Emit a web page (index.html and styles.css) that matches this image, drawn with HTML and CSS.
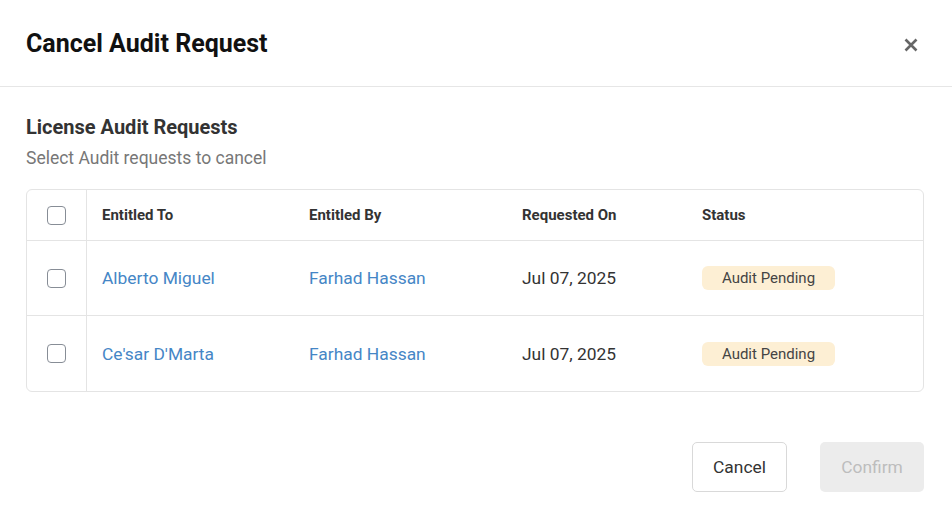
FILE: index.html
```html
<!DOCTYPE html>
<html lang="en">
<head>
  <meta charset="UTF-8">
  <meta name="viewport" content="width=device-width, initial-scale=1.0">
  <title>Cancel Audit Request</title>
  <link rel="stylesheet" href="styles.css">
</head>
<body>
  <div class="modal">
    <div class="modal-header">
      <h2>Cancel Audit Request</h2>
      <button class="close-btn" aria-label="Close">
        <svg width="14" height="14" viewBox="0 0 14 14">
          <path d="M1.5 1.5 L12.5 12.5 M12.5 1.5 L1.5 12.5" stroke="#666" stroke-width="2.6" stroke-linecap="butt"/>
        </svg>
      </button>
    </div>

    <div class="modal-body">
      <h3>License Audit Requests</h3>
      <p class="subtitle">Select Audit requests to cancel</p>

      <div class="audit-table">
        <div class="row head">
          <div class="cell check"><span class="checkbox"></span></div>
          <div class="cell">Entitled To</div>
          <div class="cell">Entitled By</div>
          <div class="cell">Requested On</div>
          <div class="cell">Status</div>
        </div>
        <div class="row">
          <div class="cell check"><span class="checkbox"></span></div>
          <div class="cell"><a href="#">Alberto Miguel</a></div>
          <div class="cell"><a href="#">Farhad Hassan</a></div>
          <div class="cell">Jul 07, 2025</div>
          <div class="cell"><span class="badge">Audit Pending</span></div>
        </div>
        <div class="row">
          <div class="cell check"><span class="checkbox"></span></div>
          <div class="cell"><a href="#">Ce'sar D'Marta</a></div>
          <div class="cell"><a href="#">Farhad Hassan</a></div>
          <div class="cell">Jul 07, 2025</div>
          <div class="cell"><span class="badge">Audit Pending</span></div>
        </div>
      </div>
    </div>

    <div class="modal-footer">
      <button class="btn btn-cancel">Cancel</button>
      <button class="btn btn-confirm" disabled>Confirm</button>
    </div>
  </div>
</body>
</html>
```

FILE: styles.css
```css
body {
  margin: 0;
  font-family: Roboto, "Liberation Sans", Arial, sans-serif;
  background: #fff;
  color: #333;
}
.modal {
  width: 952px;
  height: 516px;
  background: #fff;
}
.modal-header {
  height: 86px;
  padding: 0 26px;
  display: flex;
  align-items: center;
  justify-content: space-between;
  border-bottom: 1px solid #e6e6e6;
}
.modal-header h2 {
  margin: 0;
  font-size: 25px;
  font-weight: 700;
  color: #111;
}
.close-btn {
  background: none;
  border: none;
  padding: 0;
  margin-right: 8px;
  margin-top: 3px;
  width: 14px;
  height: 14px;
  cursor: pointer;
}
.close-btn svg {
  display: block;
}
.modal-body {
  padding: 28px 28px 0 26px;
}
.modal-body h3 {
  margin: 0;
  font-size: 20px;
  line-height: 24px;
  font-weight: 700;
  color: #333;
}
.subtitle {
  margin: 9px 0 0;
  font-size: 17.5px;
  line-height: 20px;
  color: #777;
}
.audit-table {
  margin-top: 21px;
  border: 1px solid #e4e4e4;
  border-radius: 6px;
}
.row {
  display: grid;
  grid-template-columns: 60px 207px 213px 180px 1fr;
  height: 74px;
  border-top: 1px solid #e4e4e4;
}
.row:last-child {
  height: 75px;
}
.row.head {
  height: 50px;
  border-top: none;
}
.cell {
  display: flex;
  align-items: center;
  padding-left: 15px;
  font-size: 17.4px;
  color: #333;
}
.row.head .cell {
  font-size: 15px;
  font-weight: 700;
  color: #333;
}
.cell.check {
  padding-left: 20px;
  border-right: 1px solid #e4e4e4;
}
.checkbox {
  width: 17px;
  height: 17px;
  border: 1.5px solid #878d96;
  border-radius: 4px;
  box-sizing: content-box;
}
.cell a {
  color: #4586c6;
  text-decoration: none;
}
.badge {
  display: inline-block;
  width: 133px;
  height: 24px;
  line-height: 24px;
  text-align: center;
  background: #fdefd4;
  border-radius: 6px;
  font-size: 15px;
  color: #444;
}
.modal-footer {
  display: flex;
  justify-content: flex-end;
  gap: 33px;
  padding: 50px 28px 0 0;
}
.btn {
  height: 50px;
  border-radius: 5px;
  font-family: inherit;
  font-size: 17.4px;
}
.btn-cancel {
  width: 95px;
  background: #fff;
  border: 1px solid #d9d9d9;
  color: #333;
  cursor: pointer;
}
.btn-confirm {
  width: 104px;
  background: #ececec;
  border: none;
  color: #bdbdbd;
}
```
